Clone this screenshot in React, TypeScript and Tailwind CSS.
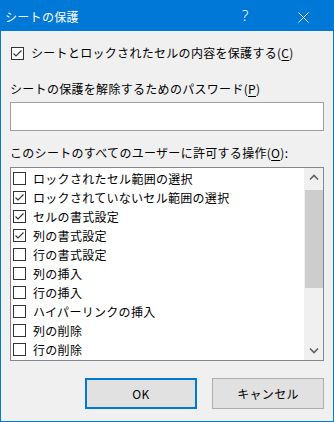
import React from "react";

const FONT = { fontFamily: '"Yu Gothic UI","Noto Sans CJK JP","Noto Sans",sans-serif' };

function Box({ checked }: { checked: boolean }) {
  return (
    <div className="w-[13px] h-[13px] border border-[#333333] bg-white shrink-0 relative">
      {checked && (
        <svg width="11" height="11" viewBox="0 0 11 11" className="absolute left-0 top-0">
          <path d="M1.5 5.5 L4 8 L9.5 2.5" fill="none" stroke="#333333" strokeWidth="1.1" />
        </svg>
      )}
    </div>
  );
}

const items: [string, boolean][] = [
  ["ロックされたセル範囲の選択", false],
  ["ロックされていないセル範囲の選択", true],
  ["セルの書式設定", true],
  ["列の書式設定", true],
  ["行の書式設定", false],
  ["列の挿入", false],
  ["行の挿入", false],
  ["ハイパーリンクの挿入", false],
  ["列の削除", false],
  ["行の削除", false],
];

export default function App() {
  return (
    <div
      className="w-[334px] h-[422px] bg-[#0078d7] flex flex-col text-black text-[12px] tracking-[0.3px]"
      style={FONT}
    >
      <div className="h-[31px] flex items-center text-white shrink-0 relative">
        <span className="ml-[5px] text-[12px] leading-none mt-[2px]">シートの保護</span>
        <span className="absolute left-[242px] top-[8px] text-[15px] leading-none" style={{ fontFamily: '"Noto Sans",sans-serif', fontWeight: 300 }}>?</span>
        <svg width="11" height="11" viewBox="0 0 11 11" className="absolute left-[298px] top-[12px]">
          <path d="M0.5 0.5 L10.5 10.5 M10.5 0.5 L0.5 10.5" stroke="white" strokeWidth="1" />
        </svg>
      </div>
      <div className="flex-1 mx-[1px] mb-[1px] bg-[#f0f0f0] px-[9px] flex flex-col">
        <div className="mt-[14px] h-[16px] flex items-center">
          <div className="ml-[1px]">
            <Box checked />
          </div>
          <span className="ml-[7px] leading-none">
            シートとロックされたセルの内容を保護する(<span className="underline underline-offset-2">C</span>)
          </span>
        </div>
        <div className="mt-[20px] h-[16px] flex items-center leading-none">
          シートの保護を解除するためのパスワード(<span className="underline underline-offset-2">P</span>)
        </div>
        <div className="mt-[5px] h-[29px] border border-[#a0a0a0] bg-white shrink-0" />
        <div className="mt-[14px] h-[16px] flex items-center leading-none">
          このシートのすべてのユーザーに許可する操作(<span className="underline underline-offset-2">O</span>):
        </div>
        <div className="mt-[6px] h-[194px] border border-[#828790] bg-white flex shrink-0">
          <div className="flex-1 flex flex-col pt-[1px]">
            {items.map(([label, checked]) => (
              <div key={label} className="h-[19px] flex items-center pl-[2px]">
                <Box checked={checked} />
                <span className="ml-[7px] leading-none">{label}</span>
              </div>
            ))}
          </div>
          <div className="w-[19px] bg-[#f0f0f0] flex flex-col items-center">
            <div className="h-[17px] w-full flex items-center justify-center shrink-0 mt-[1px]">
              <svg width="10" height="7" viewBox="0 0 10 7">
                <path d="M1 5.5 L5 1.5 L9 5.5" fill="none" stroke="#606060" strokeWidth="1.6" />
              </svg>
            </div>
            <div className="mt-[4px] h-[98px] w-[18px] bg-[#cdcdcd]" />
            <div className="flex-1" />
            <div className="h-[17px] w-full flex items-center justify-center shrink-0 mb-[1px]">
              <svg width="10" height="7" viewBox="0 0 10 7">
                <path d="M1 1.5 L5 5.5 L9 1.5" fill="none" stroke="#606060" strokeWidth="1.6" />
              </svg>
            </div>
          </div>
        </div>
        <div className="mt-[17px] h-[31px] flex justify-end gap-[15px] shrink-0">
          <div className="w-[112px] h-[31px] border-2 border-[#0078d7] bg-[#e1e1e1] flex items-center justify-center leading-none">
            OK
          </div>
          <div className="w-[112px] h-[31px] border border-[#adadad] bg-[#e1e1e1] flex items-center justify-center leading-none">
            キャンセル
          </div>
        </div>
      </div>
    </div>
  );
}
